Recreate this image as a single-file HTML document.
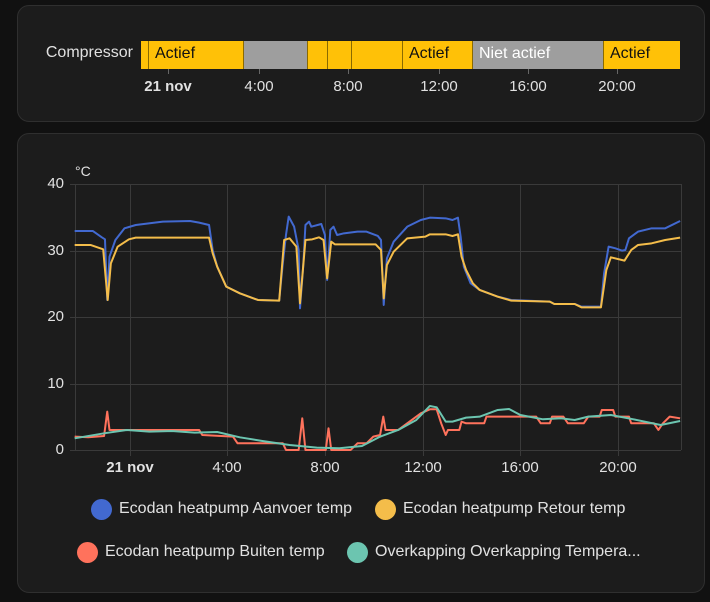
<!DOCTYPE html>
<html><head><meta charset="utf-8"><style>
body{margin:0;width:710px;height:602px;background:#111;font-family:"Liberation Sans",sans-serif;color:#e1e1e1;position:relative;overflow:hidden}
.card{position:absolute;background:#1c1c1c;border:1px solid #2f2f2f;border-radius:12px;box-sizing:border-box}
.t{position:absolute;white-space:nowrap;font-size:15px}
.seg{position:absolute;top:41px;height:28px;box-sizing:border-box;border-right:1px solid #8a6a00;font-size:16px;line-height:26px;padding-left:6px;color:#111;overflow:hidden}
.y{background:#ffc107}.g{background:#9e9e9e;color:#fff}
.tick{position:absolute;top:69px;width:1px;height:5px;background:#666}
.xl{position:absolute;font-size:15px;transform:translateX(-50%);white-space:nowrap}
.dot{position:absolute;width:21px;height:21px;border-radius:50%}
.lg{font-size:16px}
</style></head><body>
<div class="card" style="left:17px;top:5px;width:688px;height:117px"></div>
<div class="t" style="right:577px;top:44px;font-size:16px">Compressor</div>
<div class="seg y" style="left:141px;width:8px;padding:0"></div>
<div class="seg y" style="left:149px;width:95px">Actief</div>
<div class="seg g" style="left:244px;width:64px"></div>
<div class="seg y" style="left:308px;width:20px"></div>
<div class="seg y" style="left:328px;width:24px"></div>
<div class="seg y" style="left:352px;width:51px"></div>
<div class="seg y" style="left:403px;width:70px">Actief</div>
<div class="seg g" style="left:473px;width:131px">Niet actief</div>
<div class="seg y" style="left:604px;width:76px;border:0">Actief</div>
<div class="tick" style="left:168px"></div><div class="tick" style="left:259px"></div><div class="tick" style="left:348px"></div><div class="tick" style="left:439px"></div><div class="tick" style="left:528px"></div><div class="tick" style="left:617px"></div>
<div class="xl" style="left:168px;top:78px;font-weight:bold">21 nov</div>
<div class="xl" style="left:259px;top:78px">4:00</div>
<div class="xl" style="left:348px;top:78px">8:00</div>
<div class="xl" style="left:439px;top:78px">12:00</div>
<div class="xl" style="left:528px;top:78px">16:00</div>
<div class="xl" style="left:617px;top:78px">20:00</div>

<div class="card" style="left:17px;top:133px;width:688px;height:460px"></div>
<div class="t" style="left:75px;top:163px;font-size:14px">°C</div>
<div class="t" style="right:646px;top:175px">40</div>
<div class="t" style="right:646px;top:242px">30</div>
<div class="t" style="right:646px;top:308px">20</div>
<div class="t" style="right:646px;top:375px">10</div>
<div class="t" style="right:646px;top:441px">0</div>
<svg style="position:absolute;left:0;top:0" width="710" height="602">
<g stroke="#3a3a3a" stroke-width="1">
<line x1="70" y1="184.5" x2="681" y2="184.5"/><line x1="70" y1="251.5" x2="681" y2="251.5"/><line x1="70" y1="317.5" x2="681" y2="317.5"/><line x1="70" y1="384.5" x2="681" y2="384.5"/><line x1="70" y1="450.5" x2="681" y2="450.5"/>
<line x1="75.5" y1="184" x2="75.5" y2="450"/><line x1="681.5" y1="184" x2="681.5" y2="450"/>
<line x1="130.5" y1="184" x2="130.5" y2="456"/><line x1="227.5" y1="184" x2="227.5" y2="456"/><line x1="325.5" y1="184" x2="325.5" y2="456"/><line x1="423.5" y1="184" x2="423.5" y2="456"/><line x1="520.5" y1="184" x2="520.5" y2="456"/><line x1="618.5" y1="184" x2="618.5" y2="456"/>
</g>
<g transform="translate(0,150) scale(0.4525,0.3333)" fill="none" stroke-width="2" stroke-linejoin="round">
<polyline vector-effect="non-scaling-stroke" stroke="#4269d0" points="165,243 205,243 225,262 232,268 237,450 242,320 255,270 275,235 300,225 360,215 420,213 440,218 462,225 470,300 480,350 500,410 530,430 570,450 617,452 625,340 632,255 638,200 650,230 660,300 663,475 670,350 675,225 683,215 688,230 710,222 718,255 723,390 730,240 737,230 745,255 760,250 790,245 810,245 835,258 842,270 848,465 855,325 870,275 900,230 930,210 950,203 985,205 1000,210 1012,203 1018,260 1025,350 1040,400 1060,420 1100,440 1130,450 1215,455 1225,462 1270,462 1285,470 1328,470 1335,370 1345,290 1360,295 1375,302 1382,300 1390,265 1410,245 1440,235 1470,235 1503,213"/>
<polyline vector-effect="non-scaling-stroke" stroke="#f4bd4a" points="165,285 200,285 228,298 238,450 245,340 260,290 285,268 300,263 462,263 470,310 480,350 500,410 530,430 570,450 617,452 628,270 640,265 655,290 663,460 675,270 690,268 705,262 715,270 723,385 732,275 740,283 830,283 842,300 848,445 855,345 870,305 900,265 940,260 950,253 985,253 1000,258 1012,253 1020,320 1030,360 1045,400 1060,420 1100,440 1130,452 1215,455 1225,462 1270,462 1285,472 1328,472 1340,360 1350,322 1380,332 1395,300 1410,285 1440,280 1470,270 1503,263"/>
<polyline vector-effect="non-scaling-stroke" stroke="#ff725c" points="165,860 195,862 230,858 237,785 242,840 300,840 440,840 447,855 515,860 525,880 535,880 545,880 625,880 632,900 660,900 668,805 675,900 720,900 726,835 732,900 775,900 790,880 810,880 825,860 840,855 847,800 852,840 880,840 900,820 930,790 950,778 965,778 975,820 985,855 990,840 1015,840 1020,815 1030,820 1070,820 1075,800 1185,800 1195,820 1215,820 1220,800 1245,800 1255,820 1290,820 1300,800 1325,800 1330,780 1355,780 1360,800 1390,800 1395,820 1445,820 1455,840 1465,820 1480,800 1503,805"/>
<polyline vector-effect="non-scaling-stroke" stroke="#6cc5b0" points="165,865 230,850 280,840 330,845 380,843 430,848 480,846 530,862 580,873 640,885 700,893 750,895 800,888 840,860 880,840 920,810 950,768 965,772 985,815 1000,815 1030,803 1060,800 1100,780 1125,777 1150,795 1200,808 1240,805 1270,810 1300,800 1350,795 1400,808 1460,825 1503,813"/>
</g>
</svg>
<div class="xl" style="left:130px;top:459px;font-weight:bold">21 nov</div>
<div class="xl" style="left:227px;top:459px">4:00</div>
<div class="xl" style="left:325px;top:459px">8:00</div>
<div class="xl" style="left:423px;top:459px">12:00</div>
<div class="xl" style="left:520px;top:459px">16:00</div>
<div class="xl" style="left:618px;top:459px">20:00</div>

<div class="dot" style="left:91px;top:499px;background:#4269d0"></div>
<div class="t lg" style="left:119px;top:500px">Ecodan heatpump Aanvoer temp</div>
<div class="dot" style="left:375px;top:499px;background:#f4bd4a"></div>
<div class="t lg" style="left:403px;top:500px">Ecodan heatpump Retour temp</div>
<div class="dot" style="left:77px;top:542px;background:#ff725c"></div>
<div class="t lg" style="left:105px;top:543px">Ecodan heatpump Buiten temp</div>
<div class="dot" style="left:347px;top:542px;background:#6cc5b0"></div>
<div class="t lg" style="left:375px;top:543px">Overkapping Overkapping Tempera...</div>
</body></html>
